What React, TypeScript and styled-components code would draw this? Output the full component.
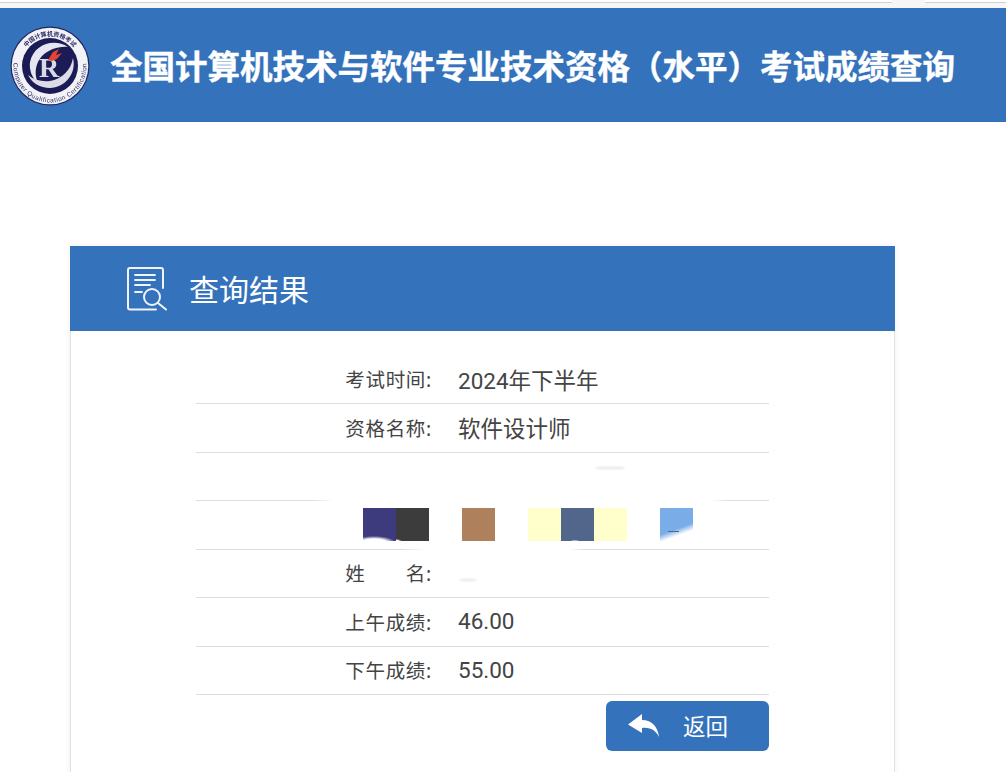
import React from 'react';
import styled, { createGlobalStyle } from 'styled-components';

const GlobalStyle = createGlobalStyle`
  html, body {
    margin: 0;
    padding: 0;
    background: #fff;
    height: 100%;
    overflow: hidden;
    font-family: "Noto Sans", "Noto Sans CJK SC", sans-serif;
  }
`;

const TopStrip = styled.div`
  height: 8px;
  background:
    linear-gradient(90deg, #fff 892px, #f6f6f6 892px, #f6f6f6 925px, #fff 925px) 0 0 / 100% 2px no-repeat,
    linear-gradient(90deg, #d0d0d0 892px, #f6f6f6 892px, #f6f6f6 925px, #d0d0d0 925px) 0 2px / 100% 1px no-repeat,
    #f6f6f6;
`;

const Header = styled.header`
  height: 114px;
  background: #3472bc;
  display: flex;
  align-items: center;
  padding-left: 10px;
  gap: 20px;
`;

const LogoMark = styled.svg`
  margin-top: 2px;
  filter: blur(0.35px);
`;

const Title = styled.h1`
  margin: 0;
  color: #fff;
  font-size: 32.5px;
  font-weight: 700;
  white-space: nowrap;
  -webkit-text-stroke: 0.4px #fff;
`;

const Card = styled.section`
  box-sizing: border-box;
  width: 825px;
  height: 526px;
  margin: 124px 0 0 70px;
  background: #fff;
  border: solid #e2e2e2;
  border-width: 0 1px;
  box-shadow: 0 0 6px rgba(0, 0, 0, 0.07);
`;

const CardHead = styled.div`
  height: 85px;
  margin: 0 -1px;
  background: #3472bc;
  display: flex;
  align-items: center;
  padding-left: 57px;
  gap: 22px;
`;

const CardTitle = styled.h2`
  margin: 0 0 2px;
  color: #fff;
  font-size: 30px;
  font-weight: 400;
`;

const Rows = styled.div`
  width: 573px;
  margin: 24.5px 0 0 125px;
`;

const Row = styled.div<{ $line?: string }>`
  height: 48.5px;
  box-sizing: border-box;
  display: flex;
  align-items: center;
  padding-bottom: 1px;
  background: ${(p) => p.$line || 'linear-gradient(#ddd, #ddd)'} left bottom / 100% 1px no-repeat;
`;

const Label = styled.span`
  width: 236px;
  flex: none;
  padding-bottom: 1px;
  text-align: right;
  font-size: 19.5px;
  letter-spacing: 0.7px;
  color: #444;
  white-space: pre;
`;

const Value = styled.span`
  margin-left: 26px;
  padding-bottom: 1px;
  font-family: Roboto, "Noto Sans CJK SC", sans-serif;
  font-size: 22.5px;
  color: #444;
`;

const Mosaic = styled.div`
  display: flex;
  margin: -1px 0 0 167px;
`;

const Tile = styled.div<{ $color?: string; $smudge?: string }>`
  width: 33px;
  height: 33px;
  background: ${(p) => (p.$smudge ? `${p.$smudge}, ` : '')}${(p) => p.$color || 'transparent'};
`;

const Smear = styled.div<{ $left: number; $top: number; $width: number }>`
  width: ${(p) => p.$width}px;
  height: 2px;
  margin: ${(p) => p.$top}px 0 0 ${(p) => p.$left}px;
  background: #e4e4e8;
  filter: blur(1px);
`;

const Actions = styled.div`
  display: flex;
  justify-content: flex-end;
  margin-top: 5.5px;
`;

const BackButton = styled.button`
  width: 163px;
  height: 50px;
  border: none;
  border-radius: 6px;
  background: #3472bc;
  color: #fff;
  font: inherit;
  font-size: 22.5px;
  display: flex;
  align-items: center;
  padding: 0 0 0 22px;
  gap: 24px;
`;

const Logo = () => (
  <LogoMark width="80" height="80" viewBox="0 0 80 80">
    <defs>
      <path id="logoTop" d="M10 40a30 30 0 0 1 60 0" />
      <path id="logoBottom" d="M6.900 24.600A36.500 36.500 0 1 0 73.100 24.600" />
    </defs>
    <circle cx="40" cy="40" r="39.500" fill="#23235f" />
    <circle cx="40" cy="40" r="38.300" fill="#f3f3f7" />
    <circle cx="40" cy="40" r="28" fill="#1b1b55" />
    <text fontSize="6" fill="#2a2a66" fontWeight="700" fontFamily="Noto Sans CJK SC, sans-serif">
      <textPath href="#logoTop" startOffset="50%" textAnchor="middle">中国计算机资格考试</textPath>
    </text>
    <text fontSize="6.500" letterSpacing="0.5" fill="#33336c" fontFamily="Liberation Sans, sans-serif">
      <textPath href="#logoBottom" startOffset="50%" textAnchor="middle">Computer Qualification Certification</textPath>
    </text>
    <path d="M58 21C44 12 24 18 20 36c-1 8 2 16 8 21-4-9-3-19 4-27 6-6 16-10 26-9z" fill="#e6e6f0" />
    <path d="M63 32c4 16-9 30-23 30-10 0-18-5-22-13 6 5 14 7 22 6 12-2 21-11 23-23z" fill="#dcdce8" />
    <text x="29" y="51" fontSize="28" fontWeight="700" fill="#d9dae6" fontFamily="Liberation Serif, serif">R</text>
    <path d="M38 34l5-8 6-3-3 6 6-2-5 6-5 2z" fill="#e2452f" />
  </LogoMark>
);

const ResultIcon = () => (
  <svg width="40" height="44" viewBox="0 0 40 44" fill="none" stroke="#eef4fa" strokeWidth="2" strokeLinecap="round">
    <path d="M29 42.500H3a2 2 0 0 1-2-2V3a2 2 0 0 1 2-2h31a2 2 0 0 1 2 2v18" />
    <path d="M8 8h20M8 13h20M8 18h15M8 25h7" strokeWidth="1.800" />
    <circle cx="25" cy="30" r="8" />
    <path d="M31 36l8 6.500" />
  </svg>
);

const ReplyIcon = () => (
  <svg width="31" height="24" viewBox="0 0 31 24">
    <path d="M14 0v6c10 0 16 7 17 17-3-6-8-10-17-9v5L0 10.500z" fill="#fff" />
  </svg>
);

const App: React.FC = () => (
  <>
    <GlobalStyle />
    <TopStrip />
    <Header>
      <Logo />
      <Title>全国计算机技术与软件专业技术资格（水平）考试成绩查询</Title>
    </Header>
    <Card>
      <CardHead>
        <ResultIcon />
        <CardTitle>查询结果</CardTitle>
      </CardHead>
      <Rows>
        <Row>
          <Label>考试时间:</Label>
          <Value>2024年下半年</Value>
        </Row>
        <Row>
          <Label>资格名称:</Label>
          <Value>软件设计师</Value>
        </Row>
        <Row $line="linear-gradient(90deg, #ddd 20%, #fff 24%, #fff 90%, #ddd 93%)">
          <Smear $left={400} $top={-16} $width={28} />
        </Row>
        <Row $line="linear-gradient(90deg, #ddd 36%, #fff 40%, #fff 65%, #ddd 68%)">
          <Mosaic>
            <Tile $color="#3e3a7e" $smudge="radial-gradient(ellipse 22px 7px at 11px 35px, #fff 60%, transparent 100%)" />
            <Tile $color="#3c3c3c" $smudge="radial-gradient(ellipse 6px 2px at 0 33px, #fff 40%, transparent 100%)" />
            <Tile />
            <Tile $color="#ae805c" />
            <Tile />
            <Tile $color="#ffffcc" />
            <Tile $color="#52668c" $smudge="radial-gradient(ellipse 5px 1px at 14px 33px, #aab6cc 50%, transparent 100%)" />
            <Tile $color="#ffffcc" />
            <Tile />
            <Tile
              $color="#7aade8"
              $smudge="linear-gradient(#4a6a96, #4a6a96) 8px 23px / 11px 1px no-repeat, linear-gradient(160deg, transparent 60%, #fff 76%)"
            />
          </Mosaic>
        </Row>
        <Row>
          <Label>姓       名:</Label>
          <Smear $left={28} $top={14} $width={16} />
        </Row>
        <Row>
          <Label>上午成绩:</Label>
          <Value>46.00</Value>
        </Row>
        <Row>
          <Label>下午成绩:</Label>
          <Value>55.00</Value>
        </Row>
        <Actions>
          <BackButton>
            <ReplyIcon />
            返回
          </BackButton>
        </Actions>
      </Rows>
    </Card>
  </>
);

export default App;
